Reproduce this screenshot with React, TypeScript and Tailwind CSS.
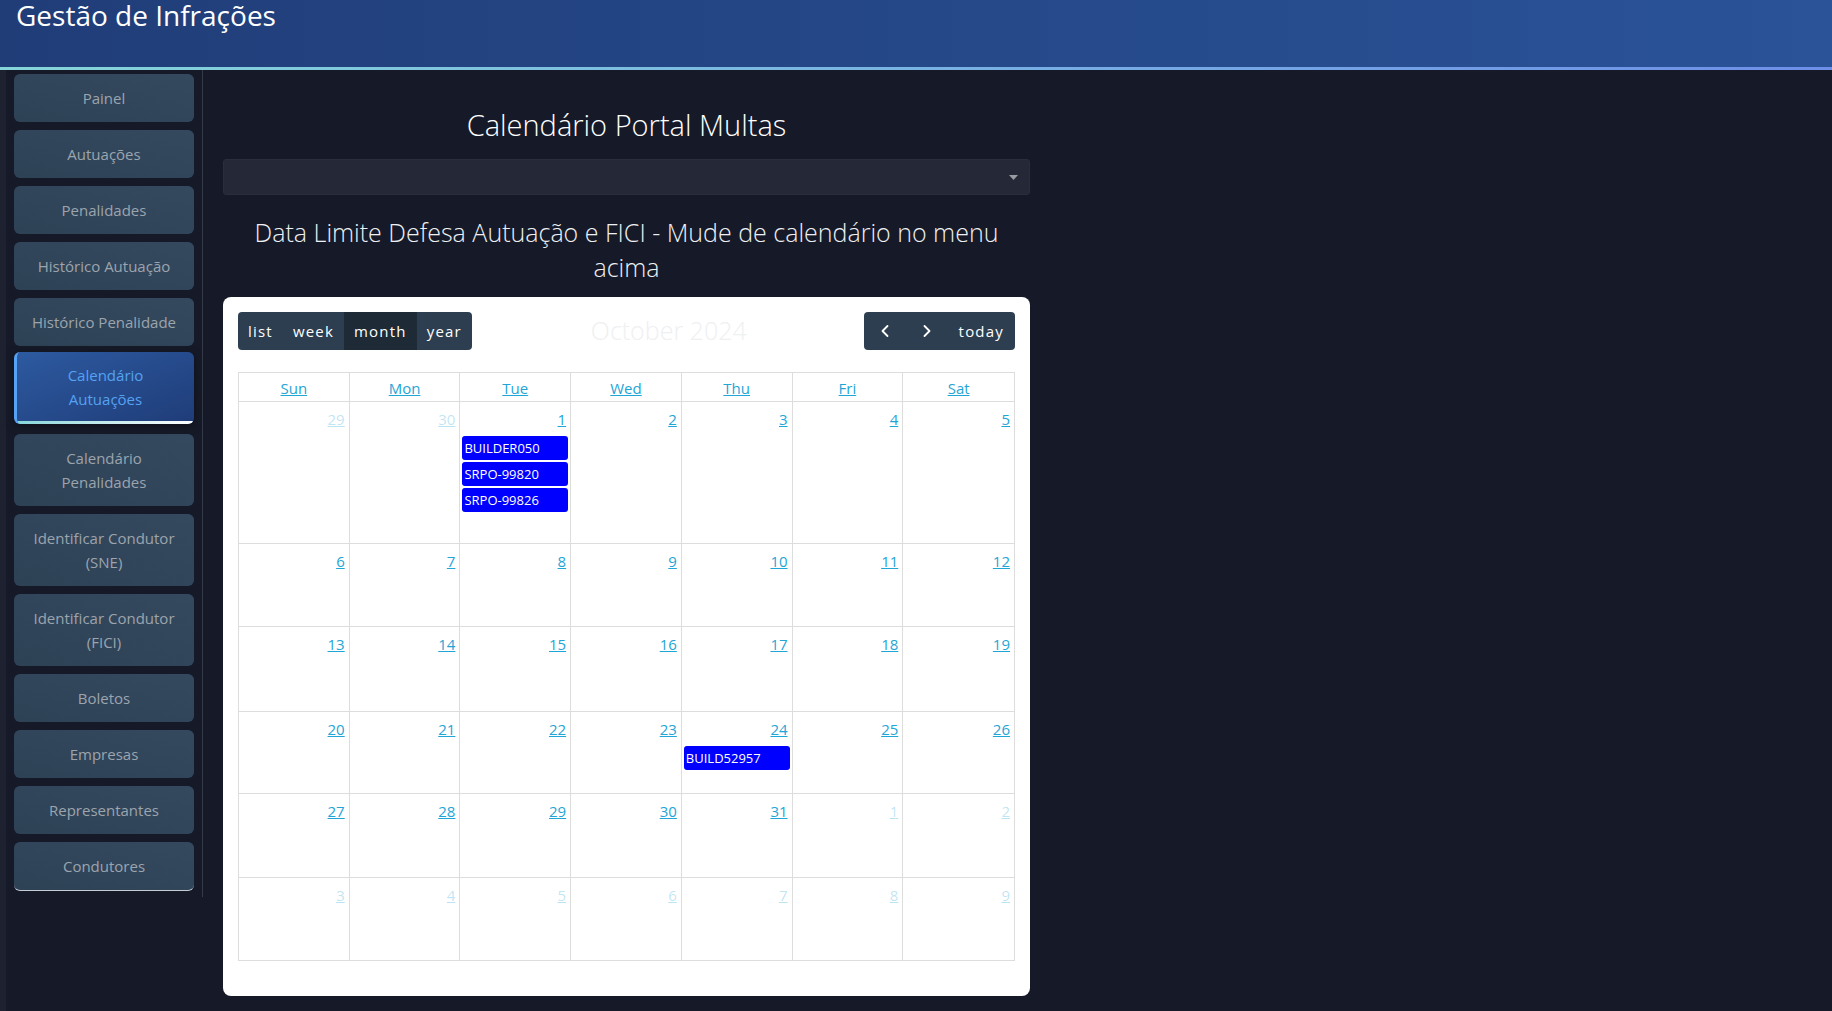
import { ChevronLeft, ChevronRight } from "lucide-react";

const menu = [
  { label: "Painel" },
  { label: "Autuações" },
  { label: "Penalidades" },
  { label: "Histórico Autuação" },
  { label: "Histórico Penalidade" },
  { label: "Calendário Autuações", active: true },
  { label: "Calendário Penalidades" },
  { label: "Identificar Condutor (SNE)" },
  { label: "Identificar Condutor (FICI)" },
  { label: "Boletos" },
  { label: "Empresas" },
  { label: "Representantes" },
  { label: "Condutores", last: true },
];

type Day = { n: number; other?: boolean; events?: string[] };

// October 2024, weeks starting Sunday
const weeks: Day[][] = [
  [
    { n: 29, other: true },
    { n: 30, other: true },
    { n: 1, events: ["BUILDER050", "SRPO-99820", "SRPO-99826"] },
    { n: 2 },
    { n: 3 },
    { n: 4 },
    { n: 5 },
  ],
  [6, 7, 8, 9, 10, 11, 12].map((n) => ({ n })),
  [13, 14, 15, 16, 17, 18, 19].map((n) => ({ n })),
  [
    { n: 20 },
    { n: 21 },
    { n: 22 },
    { n: 23 },
    { n: 24, events: ["BUILD52957"] },
    { n: 25 },
    { n: 26 },
  ],
  [
    { n: 27 },
    { n: 28 },
    { n: 29 },
    { n: 30 },
    { n: 31 },
    { n: 1, other: true },
    { n: 2, other: true },
  ],
  [3, 4, 5, 6, 7, 8, 9].map((n) => ({ n, other: true })),
];

const rowHeights = ["h-[142px]", "h-[83px]", "h-[85px]", "h-[82px]", "h-[84px]", "h-[83px]"];

const dayNames = ["Sun", "Mon", "Tue", "Wed", "Thu", "Fri", "Sat"];

export default function App() {
  return (
    <div className="min-h-screen bg-[#161a28] font-['Open_Sans',sans-serif] flex flex-col">
      {/* Header */}
      <header className="h-[67px] bg-gradient-to-r from-[#203d78] to-[#2a5398] pl-[16px]">
        <h1 className="text-[28px] leading-[30px] text-white">Gestão de Infrações</h1>
      </header>
      <div className="h-[3px] bg-gradient-to-r from-[#86d6d9] to-[#6e8ee8]" />

      <div className="flex flex-1">
        <div className="w-[6px] bg-[#1d2130] shrink-0" />

        {/* Sidebar */}
        <div className="self-start">
          <nav className="w-[197px] border-r border-[#343a48] pl-[8px] pt-[4px] pb-[6px] flex flex-col gap-2">
            {menu.map((m) =>
              m.active ? (
                <div
                  key={m.label}
                  className="relative w-[180px] h-[72px] -mt-[2px] mb-[2px] rounded-[6px] overflow-hidden bg-gradient-to-br from-[#2d5aa0] to-[#1f3c78] border-l-[3px] border-[#56a3f5] shadow-[0_2px_10px_rgba(0,0,0,0.4)] flex items-center justify-center text-center text-[15px] leading-[24px] text-[#55a2f2] px-4 pb-[2px]"
                >
                  {m.label}
                  <div className="absolute left-0 right-0 bottom-0 h-[3px] bg-gradient-to-r from-[#86d6d9] to-white" />
                </div>
              ) : (
                <div
                  key={m.label}
                  className={`w-[180px] rounded-[6px] bg-gradient-to-tr from-[#2e4256] to-[#34495e] py-3 px-4 text-center text-[15px] leading-[24px] text-[#9ca4ae] ${
                    m.last ? "border-b border-[#c5ccd3]" : ""
                  }`}
                >
                  {m.label}
                </div>
              )
            )}
          </nav>
        </div>

        {/* Main */}
        <main className="pl-[20px] pt-[36px]">
          <div className="w-[807px]">
            <h2 className="text-center text-[29px] font-light leading-[38px] text-white">Calendário Portal Multas</h2>

            <div className="mt-[15px] h-[36px] rounded-[3px] bg-[#252836] border border-[#2a2d3b] flex items-center justify-end pr-[11px]">
              <svg width="9" height="5" viewBox="0 0 9 5">
                <path d="M0 0 L9 0 L4.5 5 Z" fill="#9a9ba0" />
              </svg>
            </div>

            <p className="mt-[20px] text-center text-[25px] font-light leading-[35px] text-[#eef0f3] px-[10px]">
              Data Limite Defesa Autuação e FICI - Mude de calendário no menu acima
            </p>

            {/* Calendar card */}
            <div className="mt-[12px] bg-white rounded-[8px] px-[15px] pt-[15px] pb-[35px]">
              <div className="flex items-center justify-between h-[38px]">
                <div className="flex h-[38px] rounded-[4px] overflow-hidden text-[15px] tracking-[0.08em] text-white">
                  <button className="px-[10px] bg-[#2c3e50]">list</button>
                  <button className="px-[10px] bg-[#2c3e50]">week</button>
                  <button className="px-[10px] bg-[#1e2b37]">month</button>
                  <button className="px-[10px] bg-[#2c3e50]">year</button>
                </div>
                <div className="text-[25px] font-light text-[#eef0f2] pl-[2px]">October 2024</div>
                <div className="flex h-[38px] rounded-[4px] overflow-hidden bg-[#2c3e50] text-white text-[15px] tracking-[0.08em]">
                  <button className="w-[42px] flex items-center justify-center">
                    <ChevronLeft size={20} strokeWidth={2.2} />
                  </button>
                  <button className="w-[42px] flex items-center justify-center">
                    <ChevronRight size={20} strokeWidth={2.2} />
                  </button>
                  <button className="px-[11px]">today</button>
                </div>
              </div>

              <div className="mt-[22px] border border-[#dddddd]">
                <div className="grid grid-cols-7 h-[28px]">
                  {dayNames.map((d, i) => (
                    <div
                      key={d}
                      className={`flex items-center justify-center pt-[2px] text-[15px] text-[#1fa5d6] underline ${
                        i < 6 ? "border-r border-[#dddddd]" : ""
                      }`}
                    >
                      {d}
                    </div>
                  ))}
                </div>
                {weeks.map((w, wi) => (
                  <div key={wi} className={`grid grid-cols-7 border-t border-[#dddddd] ${rowHeights[wi]}`}>
                    {w.map((d, di) => (
                      <div key={di} className={`flex flex-col ${di < 6 ? "border-r border-[#dddddd]" : ""}`}>
                        <div
                          className={`text-right pr-[4px] pt-[6px] text-[15px] leading-[22px] underline ${
                            d.other ? "text-[#1fa5d6]/30" : "text-[#1fa5d6]"
                          }`}
                        >
                          {d.n}
                        </div>
                        {d.events && (
                          <div className="mt-[6px] flex flex-col gap-[2px] px-[2px]">
                            {d.events.map((e) => (
                              <div
                                key={e}
                                className="h-[24px] rounded-[3px] bg-[#0000ff] text-white text-[13px] leading-[24px] pl-[2px] truncate"
                              >
                                {e}
                              </div>
                            ))}
                          </div>
                        )}
                      </div>
                    ))}
                  </div>
                ))}
              </div>
            </div>
          </div>
        </main>
      </div>
    </div>
  );
}
